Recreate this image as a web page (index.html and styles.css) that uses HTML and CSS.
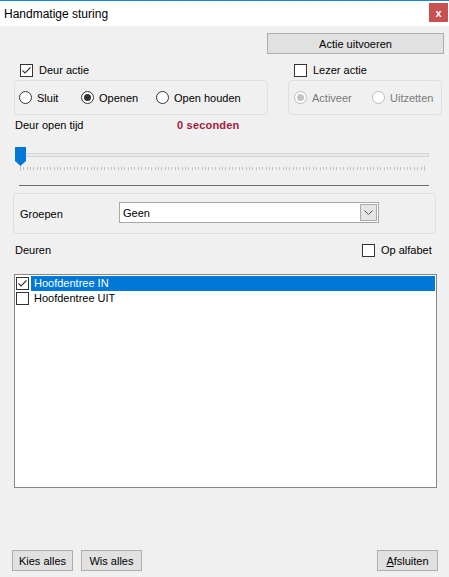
FILE: index.html
```html
<!DOCTYPE html>
<html lang="nl">
<head>
<meta charset="utf-8">
<title>Handmatige sturing</title>
<link rel="stylesheet" href="styles.css">
</head>
<body>
<div class="window">
  <div class="titlebar">
    <span class="title">Handmatige sturing</span>
    <span class="close">x</span>
  </div>

  <div class="row-actions">
    <button class="btn btn-run">Actie uitvoeren</button>
  </div>

  <div class="options">
    <div class="col col-door">
      <label class="check">
        <span class="box"><svg width="11" height="11" viewBox="0 0 11 11"><polyline points="1.5,5.5 4,8 9.5,2.5" fill="none" stroke="#333" stroke-width="1.1"/></svg></span>
        <span>Deur actie</span>
      </label>
      <div class="group group-door">
        <label class="radio r-sluit"><span class="circle"></span><span>Sluit</span></label>
        <label class="radio r-open"><span class="circle on"></span><span>Openen</span></label>
        <label class="radio"><span class="circle"></span><span>Open houden</span></label>
      </div>
    </div>
    <div class="col col-reader">
      <label class="check">
        <span class="box"></span>
        <span>Lezer actie</span>
      </label>
      <div class="group group-reader">
        <label class="radio disabled r-act"><span class="circle on"></span><span>Activeer</span></label>
        <label class="radio disabled"><span class="circle"></span><span>Uitzetten</span></label>
      </div>
    </div>
  </div>

  <div class="timer">
    <span class="timer-label">Deur open tijd</span>
    <span class="timer-value">0 seconden</span>
  </div>

  <div class="slider">
    <div class="track"></div>
    <svg class="thumb" width="11" height="19" viewBox="0 0 11 19"><polygon points="0,0 11,0 11,14 5.5,19 0,14" fill="#0078d7"/></svg>
    <div class="ticks"></div>
  </div>

  <div class="separator"></div>

  <div class="group group-groups">
    <span class="groups-label">Groepen</span>
    <div class="select">
      <span class="select-text">Geen</span>
      <span class="select-btn"><svg width="11" height="7" viewBox="0 0 11 7"><polyline points="1.5,1.5 5.5,5.5 9.5,1.5" fill="none" stroke="#555" stroke-width="1"/></svg></span>
    </div>
  </div>

  <div class="doors-row">
    <span class="doors-label">Deuren</span>
    <label class="check">
      <span class="box"></span>
      <span>Op alfabet</span>
    </label>
  </div>

  <div class="list">
    <div class="item selected">
      <span class="box"><svg width="11" height="11" viewBox="0 0 11 11"><polyline points="1.5,5.5 4,8 9.5,2.5" fill="none" stroke="#333" stroke-width="1.1"/></svg></span>
      <span class="item-text">Hoofdentree IN</span>
    </div>
    <div class="item">
      <span class="box"></span>
      <span class="item-text">Hoofdentree UIT</span>
    </div>
  </div>

  <div class="bottom">
    <button class="btn btn-small">Kies alles</button>
    <button class="btn btn-small">Wis alles</button>
    <button class="btn btn-small btn-close"><u>A</u>fsluiten</button>
  </div>
</div>
</body>
</html>
```

FILE: styles.css
```css
* { box-sizing: border-box; }

html, body {
  margin: 0;
  padding: 0;
  background: #f0f0f0;
}

body {
  font-family: "Liberation Sans", Arial, sans-serif;
  font-size: 11px;
  color: #000;
}

.window {
  width: 449px;
  height: 577px;
  display: flex;
  flex-direction: column;
  background: #f0f0f0;
  overflow: hidden;
}

/* title bar */
.titlebar {
  height: 26px;
  border-top: 1px solid #1883d7;
  background: #fff;
  display: flex;
  align-items: center;
  padding-left: 4px;
  padding-right: 1px;
}
.title {
  font-size: 12px;
  flex: 1;
  margin-top: 1px;
}
.close {
  width: 19px;
  height: 19px;
  background: #c75050;
  color: #fff;
  font-weight: bold;
  font-size: 11px;
  display: flex;
  align-items: center;
  justify-content: center;
  margin-top: -2px;
}

/* buttons */
.btn {
  font-family: inherit;
  font-size: 11px;
  color: #000;
  background: #e1e1e1;
  border: 1px solid #adadad;
  height: 21px;
  padding: 0;
  margin: 0;
}
.row-actions {
  margin-top: 7px;
  display: flex;
  justify-content: flex-end;
  padding-right: 5px;
}
.btn-run {
  width: 177px;
}

/* checkbox / radio */
.check {
  display: flex;
  align-items: center;
  height: 14px;
}
.box {
  width: 13px;
  height: 13px;
  border: 1px solid #333;
  background: #fff;
  display: inline-flex;
  align-items: center;
  justify-content: center;
  flex: none;
}
.check .box { margin-right: 6px; }

.radio {
  display: flex;
  align-items: center;
}
.circle {
  width: 13px;
  height: 13px;
  border: 1px solid #333;
  border-radius: 50%;
  background: #fff;
  display: inline-flex;
  align-items: center;
  justify-content: center;
  margin-right: 5px;
  flex: none;
}
.circle.on::after {
  content: "";
  width: 7px;
  height: 7px;
  border-radius: 50%;
  background: #333;
}
.radio.disabled { color: #7a7a7a; }
.radio.disabled .circle { border-color: #bcbcbc; }
.radio.disabled .circle.on::after { background: #c4c4c4; }

/* option groups */
.options {
  margin-top: 9px;
  display: flex;
}
.col-door { margin-left: 14px; width: 254px; }
.col-reader { margin-left: 20px; width: 154px; }
.col .check { padding-left: 6px; }

.group {
  border: 1px solid #d9e1e8;
  border-radius: 4px;
}
.group-door, .group-reader {
  margin-top: 3px;
  height: 35px;
  display: flex;
  align-items: center;
}
.group-door { padding-left: 4px; }
.group-reader { padding-left: 5px; }
.r-sluit { width: 62px; }
.r-open { width: 75px; }
.r-act { width: 78px; }

/* timer */
.timer {
  margin-top: 3px;
  height: 14px;
  display: flex;
  align-items: center;
  padding-left: 15px;
}
.timer-label { width: 162px; }
.timer-value {
  color: #a01e3c;
  font-weight: bold;
  letter-spacing: 0.2px;
}

/* slider */
.slider {
  margin-top: 15px;
  margin-left: 15px;
  width: 414px;
  height: 24px;
  position: relative;
}
.track {
  position: absolute;
  left: 0;
  right: 0;
  top: 6px;
  height: 4px;
  background: #e7eae7;
  border: 1px solid #d6d6d6;
}
.thumb {
  position: absolute;
  left: 0;
  top: 0;
}
.ticks {
  position: absolute;
  left: 5px;
  top: 20px;
  width: 405px;
  height: 3px;
  background: repeating-linear-gradient(to right, #c2c2c2 0 1px, transparent 1px 3.366px);
}
.ticks::before, .ticks::after {
  content: "";
  position: absolute;
  top: -1px;
  width: 1px;
  height: 5px;
  background: #c2c2c2;
}
.ticks::before { left: 0; }
.ticks::after { right: 0; }

.separator {
  margin-top: 14px;
  margin-left: 19px;
  width: 410px;
  height: 1px;
  background: #6d6d6d;
}

/* groups */
.group-groups {
  margin-top: 7px;
  margin-left: 13px;
  width: 423px;
  height: 41px;
  display: flex;
  align-items: center;
  padding-left: 6px;
}
.groups-label {
  width: 99px;
}
.select {
  width: 260px;
  height: 21px;
  border: 1px solid #a8a8a8;
  background: #fff;
  display: flex;
  align-items: center;
  margin-top: -2px;
}
.select-text {
  flex: 1;
  padding-left: 3px;
}
.select-btn {
  width: 17px;
  height: 17px;
  margin-right: 1px;
  background: #e5e5e5;
  border: 1px solid #acacac;
  display: flex;
  align-items: center;
  justify-content: center;
}

/* doors */
.doors-row {
  margin-top: 9px;
  height: 14px;
  display: flex;
  align-items: center;
  padding-left: 15px;
}
.doors-label {
  flex: 1;
}
.doors-row .check {
  width: 87px;
}

.list {
  margin-top: 17px;
  margin-left: 14px;
  width: 423px;
  height: 214px;
  border: 1px solid #828790;
  background: #fff;
  padding-top: 1px;
  padding-left: 1px;
}
.item {
  height: 15px;
  display: flex;
  align-items: center;
}
.item .box { margin-right: 2px; }
.item-text {
  height: 15px;
  line-height: 15px;
  padding-left: 3px;
  width: 404px;
}
.item.selected .item-text {
  background: #0078d7;
  color: #fff;
}

/* bottom buttons */
.bottom {
  margin-top: auto;
  margin-bottom: 6px;
  display: flex;
  padding-left: 12px;
}
.btn-small {
  width: 61px;
  margin-right: 8px;
}
.btn-close {
  margin-left: auto;
  margin-right: 11px;
}
```
